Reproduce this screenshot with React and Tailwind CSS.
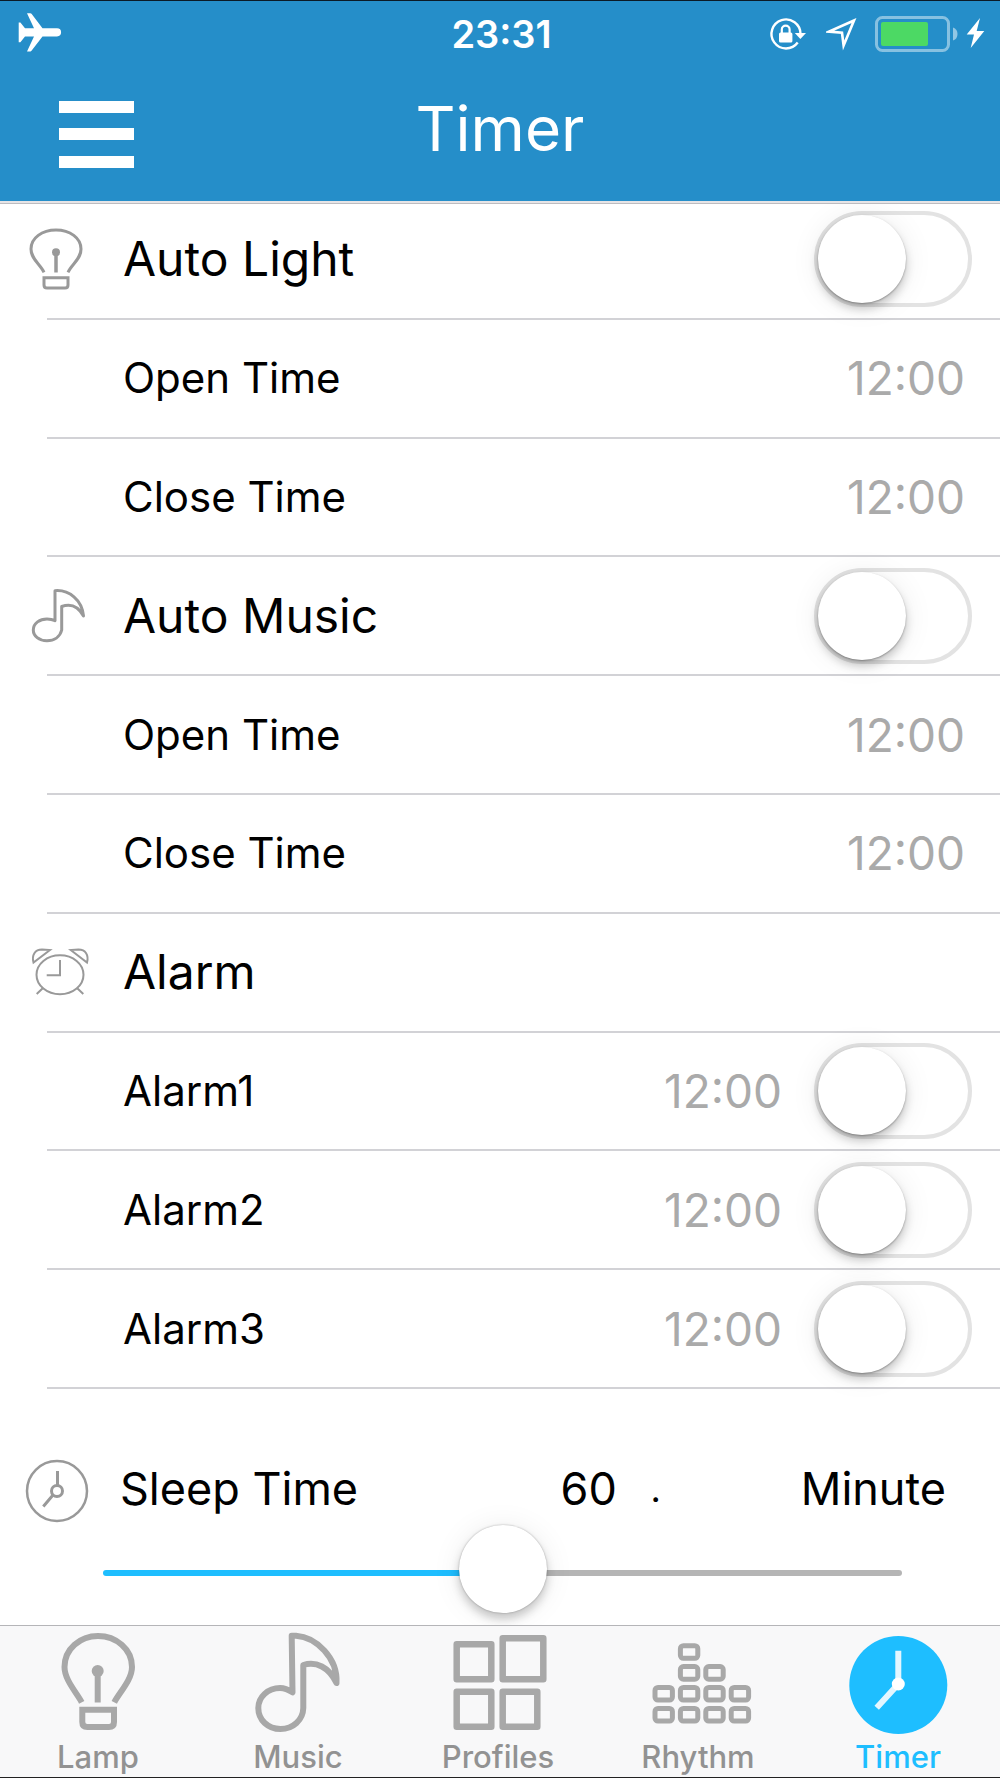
import React, { useState } from "react";

const iconProps = {
  viewBox: "0 0 64 64",
  fill: "none",
  stroke: "#999",
  className: "w-16 h-16 -ml-[23px] overflow-visible",
  "aria-hidden": true,
};

const tabIconProps = {
  viewBox: "0 0 100 100",
  fill: "none",
  stroke: "#a8a8a8",
  className: "w-[100px] h-[100px] overflow-visible",
  "aria-hidden": true,
};

const BulbIcon = () => (
  <svg {...iconProps} strokeWidth="3">
    <path d="M20 45.3C16 37 7 32 7 22C7 11 18 3 32 3C46 3 57 11 57 22C57 32 48 37 44 45.3" />
    <circle cx="32" cy="25.3" r="4" fill="#999" stroke="none" />
    <path d="M32 26V45.5" strokeWidth="3.5" />
    <path d="M20 50.7H44V58Q44 61 41 61H23Q20 61 20 58Z" />
  </svg>
);

const NoteIcon = () => (
  <svg {...iconProps} strokeWidth="3" strokeLinejoin="round">
    <path d="M31 36.7V6.7C45 5.5 58 16 59.5 32C54 22 46 19.5 37.7 22.5V46C36 53 30 56.7 23 56.7C15 56.7 9.3 52 9.3 46C9.3 39 16 35 23 35C27 35 29 35.7 31 36.7Z" />
  </svg>
);

const AlarmIcon = () => (
  <svg {...iconProps} strokeWidth="2">
    <ellipse cx="36" cy="34.7" rx="23.5" ry="19.5" />
    <path d="M36 20V35.3H22.7" />
    <path d="M19 48L12.7 54M53 48L59.3 54" />
    <path d="M26 10L9.5 22.5C7.5 15 11 9.5 18 9.5Z" />
    <path d="M46.7 10L63 22.5C65 15 61.5 9.5 54.5 9.5Z" />
  </svg>
);

const ClockIcon = () => (
  <svg {...iconProps} strokeWidth="2.5">
    <circle cx="33" cy="34" r="30" />
    <circle cx="33" cy="34" r="5.5" strokeWidth="3" />
    <path d="M33.5 14V28.5M29 38L19.3 49.5" strokeWidth="3" />
  </svg>
);

const LampTab = () => (
  <svg {...tabIconProps} strokeWidth="6">
    <path d="M31.7 70.3C27 61 14.5 48 14.5 35C14.5 17 30 4 48 4C66 4 82 17 82 35C82 48 69 61 64.3 70.3" />
    <circle cx="47.7" cy="39" r="6" fill="#a8a8a8" stroke="none" />
    <path d="M47.7 40V70.5" />
    <path d="M32.3 77.7H64V90Q64 95 59 95H37.3Q32.3 95 32.3 90Z" />
  </svg>
);

const MusicTab = () => (
  <svg {...tabIconProps} strokeWidth="6" strokeLinejoin="round">
    <path d="M42.5 60.3L41.7 3.7H46C66 5 88 26 86.5 51C79 35 66 29 53.3 33V76C53 88 43 97 30.5 97C18 97 8.3 88 8.3 76C8.3 65 18 56 30 56C35 56 39 58 42.5 60.3Z" />
  </svg>
);

const ProfilesTab = () => (
  <svg {...tabIconProps} strokeWidth="6.5" strokeLinejoin="round">
    <path d="M6.7 12.3H41.3V47.3H6.7ZM52.7 6.3H93.3V47.3H52.7ZM6.7 59.7H41.3V94.7H6.7ZM52.7 59.7H87.3V94.7H52.7Z" />
  </svg>
);

// [column, row] of every bar segment
const segments = [
  [1, 0],
  [1, 1],
  [2, 1],
  [0, 2],
  [1, 2],
  [2, 2],
  [3, 2],
  [0, 3],
  [1, 3],
  [2, 3],
  [3, 3],
];

const RhythmTab = () => (
  <svg {...tabIconProps} strokeWidth="5">
    {segments.map(([col, row]) => (
      <rect
        key={`${col}-${row}`}
        x={5 + col * 25.4}
        y={13.7 + row * 20.9}
        width="17.4"
        height="12.6"
        rx="3"
      />
    ))}
  </svg>
);

const TimerTab = () => (
  <svg {...tabIconProps}>
    <circle cx="48.3" cy="53" r="49" fill="#1ebeff" stroke="none" />
    <path d="M48.3 18.7V52L26.7 75.7" stroke="#e3f6ff" strokeWidth="6" />
    <circle cx="48.3" cy="52" r="6.5" fill="#fff" stroke="none" />
  </svg>
);

const StatusBar = () => (
  <div className="grid grid-cols-3 items-center h-[66px] pl-[18px] pr-[15px]">
    <svg viewBox="0 0 44 40" className="w-11 h-10 -mt-1" fill="#fff" aria-label="Airplane mode">
      <path d="M39 16.2H24.5L13.5 1.8Q13 1.2 12.4 1.2H9L16 16.2H7L2.4 10.4H.7V30.2H2.4L7 24.4H16L9 39.4H12.4Q13 39.4 13.5 38.8L24.5 24.4H39A4.1 4.1 0 0 0 39 16.2Z" />
    </svg>
    <span className="text-center text-[38px] leading-10 font-semibold">23:31</span>
    <div className="flex items-center justify-end">
      <svg viewBox="0 0 36 34" className="w-9 h-[34px] mr-5 overflow-visible" fill="none" aria-label="Rotation lock">
        <path d="M27.7 25.5A14.5 14.5 0 1 1 30.5 17" stroke="#fff" strokeWidth="2.4" />
        <path d="M24.8 16H36L30.4 22Z" fill="#fff" />
        <rect x="9" y="15.5" width="13.4" height="10" rx="1.5" fill="#fff" />
        <path d="M11.8 16V12.5A3.9 3.9 0 0 1 19.6 12.5V16" stroke="#fff" strokeWidth="2.2" />
      </svg>
      <svg viewBox="0 0 31 34" className="w-[31px] h-[34px] mr-[18px]" fill="none" aria-label="Location">
        <path d="M28 3.5L3 14.6L16 15.8L17.6 28.5Z" stroke="#fff" strokeWidth="2.6" />
      </svg>
      <svg viewBox="0 0 84 36" className="w-[84px] h-9 mr-[7px]" fill="none" aria-label="Battery">
        <rect x="1.5" y="1.5" width="72" height="33" rx="6" stroke="#fff" strokeOpacity=".45" strokeWidth="3" />
        <rect x="6" y="6" width="47" height="24" rx="2" fill="#4cd964" />
        <path d="M78 11.5Q82.5 13 82.5 18T78 24.5Z" fill="#fff" fillOpacity=".5" />
      </svg>
      <svg viewBox="0 0 19 34" className="w-[19px] h-[34px]" fill="#fff" aria-label="Charging">
        <path d="M14 1L.7 17.5H8L4.7 31L18.3 14H10.7Z" />
      </svg>
    </div>
  </div>
);

const Toggle = ({ id, label, checked, onChange }) => (
  <input
    id={id}
    type="checkbox"
    role="switch"
    aria-label={label}
    checked={checked}
    onChange={onChange}
    className="appearance-none flex items-center shrink-0 w-[158px] h-24 rounded-full border-4 border-[#e3e3e3] bg-white checked:bg-[#4cd964] checked:border-[#4cd964] before:content-[''] before:block before:w-[88px] before:h-[88px] before:rounded-full before:bg-white before:shadow-[0_1px_2px_rgba(0,0,0,0.3),0_6px_10px_rgba(0,0,0,0.2),0_2px_30px_rgba(0,0,0,0.08)] checked:before:translate-x-[62px]"
  />
);

const rows = [
  { id: "light", label: "Auto Light", icon: BulbIcon, toggle: true },
  { id: "light-open", label: "Open Time", time: "12:00" },
  { id: "light-close", label: "Close Time", time: "12:00" },
  { id: "music", label: "Auto Music", icon: NoteIcon, toggle: true },
  { id: "music-open", label: "Open Time", time: "12:00" },
  { id: "music-close", label: "Close Time", time: "12:00" },
  { id: "alarm", label: "Alarm", icon: AlarmIcon },
  { id: "alarm1", label: "Alarm1", time: "12:00", toggle: true },
  { id: "alarm2", label: "Alarm2", time: "12:00", toggle: true },
  { id: "alarm3", label: "Alarm3", time: "12:00", toggle: true },
];

const tabs = [
  { name: "Lamp", icon: LampTab },
  { name: "Music", icon: MusicTab },
  { name: "Profiles", icon: ProfilesTab },
  { name: "Rhythm", icon: RhythmTab },
  { name: "Timer", icon: TimerTab },
];

const App = () => {
  const [enabled, setEnabled] = useState({});
  const [minutes, setMinutes] = useState(60);
  const activeTab = "Timer";

  const handleToggle = (id) => {
    setEnabled({ ...enabled, [id]: !enabled[id] });
  };

  return (
    <div className="flex flex-col min-h-screen bg-white text-black font-['Inter',sans-serif]">
      <header className="relative bg-[#258ec9] text-white border-t border-[#0b1a26] shadow-[0_2px_0_#e6e4e6,0_3px_0_#bcbcc0]">
        <StatusBar />
        <div className="grid grid-cols-[1fr_auto_1fr] items-center h-[134px] px-[59px]">
          <button
            type="button"
            aria-label="Menu"
            className="flex flex-col justify-between w-[75px] h-[67px]"
          >
            <span className="w-full h-3 bg-white"></span>
            <span className="w-full h-3 bg-white"></span>
            <span className="w-full h-3 bg-white"></span>
          </button>
          <h1 className="text-[62px] leading-[72px] pb-2.5">Timer</h1>
        </div>
      </header>

      <main className="flex flex-col flex-1">
        <ul className="grid auto-rows-fr flex-1 pl-[47px]">
          {rows.map(({ id, label, icon: Icon, time, toggle }) => {
            const isHeading = Boolean(Icon);
            return (
              <li
                key={id}
                className={`flex items-center border-b-2 border-[#d2d2d6] ${
                  toggle ? "pr-7" : "pr-[35px]"
                }`}
              >
                <span className="w-[76px] shrink-0">{Icon && <Icon />}</span>
                <label
                  htmlFor={toggle ? id : `${id}-time`}
                  className={`flex-1 ${
                    isHeading
                      ? "text-[48px] leading-[56px]"
                      : "text-[42px] leading-[52px]"
                  }`}
                >
                  {label}
                </label>
                {time && (
                  <button
                    id={`${id}-time`}
                    type="button"
                    className={`text-[46px] leading-[52px] text-[#aaa] ${
                      toggle ? "mr-8" : ""
                    }`}
                  >
                    {time}
                  </button>
                )}
                {toggle && (
                  <Toggle
                    id={id}
                    label={label}
                    checked={Boolean(enabled[id])}
                    onChange={() => handleToggle(id)}
                  />
                )}
              </li>
            );
          })}
        </ul>

        {/* Sleep timer */}
        <section className="flex flex-col h-[236px] pt-[70px]">
          <div className="flex items-center h-[60px] pl-[47px] pr-[54px] text-[45px] leading-[56px]">
            <span className="w-[73px] shrink-0">
              <ClockIcon />
            </span>
            <label htmlFor="sleep" className="w-[49%]">
              Sleep Time
            </label>
            <output htmlFor="sleep" className="w-[90px]">
              {minutes}
            </output>
            <span className="text-[36px]">.</span>
            <span className="ml-auto">Minute</span>
          </div>
          <input
            id="sleep"
            type="range"
            min="0"
            max="120"
            value={minutes}
            onChange={(e) => setMinutes(Number(e.target.value))}
            style={{ "--fill": `${(minutes / 120) * 100}%` }}
            className="appearance-none bg-transparent h-[92px] ml-[103px] mr-[98px] mt-2 [&::-webkit-slider-runnable-track]:h-1.5 [&::-webkit-slider-runnable-track]:rounded-full [&::-webkit-slider-runnable-track]:bg-[linear-gradient(to_right,#1ebeff_var(--fill),#b5b5b5_var(--fill))] [&::-webkit-slider-thumb]:appearance-none [&::-webkit-slider-thumb]:w-[88px] [&::-webkit-slider-thumb]:h-[88px] [&::-webkit-slider-thumb]:-mt-[45px] [&::-webkit-slider-thumb]:rounded-full [&::-webkit-slider-thumb]:bg-white [&::-webkit-slider-thumb]:shadow-[0_0_2px_rgba(0,0,0,0.3),0_6px_10px_rgba(0,0,0,0.2),0_2px_30px_rgba(0,0,0,0.08)]"
          />
        </section>
      </main>

      <nav className="relative grid grid-cols-5 h-[153px] pt-1.5 bg-[#f8f8f9] border-t border-t-[#b5b5b8] border-b border-b-[#222]">
        {tabs.map(({ name, icon: Icon }) => (
          <a
            key={name}
            href={`#${name.toLowerCase()}`}
            aria-current={name === activeTab ? "page" : undefined}
            className={`flex flex-col items-center text-[31px] leading-[36px] font-medium ${
              name === activeTab ? "text-[#1ebeff]" : "text-[#929292]"
            }`}
          >
            <Icon />
            <span className="mt-[7px] mr-1">{name}</span>
          </a>
        ))}
      </nav>
    </div>
  );
};

export default App;
